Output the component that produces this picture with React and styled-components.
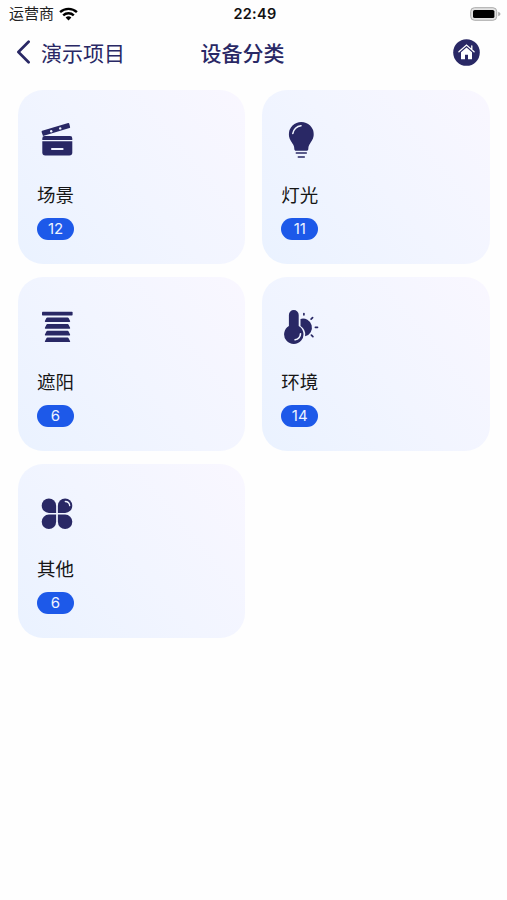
import React from 'react';
import styled, { createGlobalStyle } from 'styled-components';

const categories = [
  { id: 'scene', name: '场景', count: 12 },
  { id: 'light', name: '灯光', count: 11 },
  { id: 'shade', name: '遮阳', count: 6 },
  { id: 'climate', name: '环境', count: 14 },
  { id: 'other', name: '其他', count: 6 },
];

const icons = {
  scene: (
    <>
      <path d="M5.2 10.8 31.2 3q.8-.2 1 .6l.9 3.3q.2.8-.6 1L6 16.1l-1.4-4.2q-.2-.8.6-1.1Z" />
      <path d="M5.3 20v-1.5A2.3 2.3 0 0 1 7.6 16.1H33a2.3 2.3 0 0 1 2.3 2.4V20Z" />
      <path d="M5.3 21.3h30v11.2a3 3 0 0 1-3 3h-24a3 3 0 0 1-3-3Z" />
      <rect x="14" y="28" width="12.6" height="1.9" rx="0.9" fill="#f0f4ff" />
      <g fill="#f0f4ff">
        <circle cx="14.2" cy="11.2" r="1.2" />
        <circle cx="23.2" cy="8.4" r="1.2" />
      </g>
    </>
  ),
  light: (
    <>
      <path d="M20.3 1.9A12.4 12.4 0 0 0 7.9 14.3c0 4.6 2.3 7 4.1 10 1 1.700 1.200 3 1.300 4.600.1 1.100.700 1.800 1.700 1.800h10.600c1 0 1.600-.7 1.700-1.800.1-1.600.300-2.900 1.300-4.600 1.800-3 4.100-5.400 4.100-10A12.400 12.400 0 0 0 20.300 1.900Z" />
      <path d="M15.300 33.100h10M17.300 36.900h6" stroke="#292865" strokeWidth="1.500" strokeLinecap="round" />
      <path d="M11.800 13.500a9 9 0 0 1 8.200-7.700" stroke="#f0f4ff" strokeWidth="1.600" strokeLinecap="round" fill="none" />
    </>
  ),
  shade: (
    <>
      <rect x="5" y="4.800" width="30.600" height="3.600" rx="0.700" />
      {[10.4, 17.1, 23.8, 30.5].map(y => (
        <path key={y} d={`M10.400 ${y}h20.200q.7 0 1 .7l1.500 3q.3.9-.6.900h-24q-.9 0-.6-.9l1.500-3q.3-.7 1-.7Z`} />
      ))}
    </>
  ),
  climate: (
    <>
      <path d="M19.500 11.900a9 9 0 1 1 4.600 17.400q1.200-6.500-4.600-10.300Z" />
      <path
        d="M22.900 6.500v1.300M31.600 10.600l-1.500 1.500M34.400 20.300h2.100M30.400 28.200l1.500 1.500"
        stroke="#292865"
        strokeWidth="1.700"
        strokeLinecap="round"
      />
      <path d="M7.900 8a4.900 4.900 0 0 1 9.800 0v11a9.700 9.700 0 1 1-9.800 0Z" />
      <path d="M19.500 26.800a6.500 6.500 0 0 1-5.400 6" stroke="#f0f4ff" strokeWidth="1.600" strokeLinecap="round" fill="none" />
    </>
  ),
  other: (
    <>
      <path d="M19.100 18.900h-7.200a7.200 7.200 0 1 1 7.200-7.200Z" />
      <path d="M20.900 18.900v-7.200a7.200 7.200 0 1 1 7.200 7.200Z" />
      <path d="M19.100 20.600v7.200a7.200 7.200 0 1 1-7.200-7.200Z" />
      <path d="M20.900 20.600h7.200a7.200 7.200 0 1 1-7.200 7.200Z" />
      <path d="M28.300 7.500a4.500 4.500 0 0 1 4.400 4.100" stroke="#f0f4ff" strokeWidth="1.300" strokeLinecap="round" fill="none" />
    </>
  ),
};

const StatusIcons = {
  Wifi: () => (
    <svg width="19" height="14" viewBox="0 0 19 14" fill="none" stroke="#000" strokeWidth="2.400">
      <path d="M1.100 5.200a12.200 12.200 0 0 1 16.800 0M4.200 8.400a7.700 7.700 0 0 1 10.600 0" />
      <path d="M9.500 13.400 6.600 10.600a4.300 4.300 0 0 1 5.800 0Z" fill="#000" stroke="none" />
    </svg>
  ),
  Battery: () => (
    <svg width="31" height="14" viewBox="0 0 31 14">
      <rect x="0.700" y="0.700" width="26" height="12.600" rx="3.800" fill="#e2e2e2" stroke="#aaa" />
      <rect x="3" y="2.900" width="21.400" height="8.200" rx="1.700" fill="#000" />
      <path d="M28.200 4.700q2.300.7 2.300 2.300t-2.300 2.300Z" fill="#aaa" />
    </svg>
  ),
};

const App = () => {
  return (
    <Page>
      <GlobalStyle />
      <StatusBar>
        <Carrier>
          运营商
          <StatusIcons.Wifi />
        </Carrier>
        <Time>22:49</Time>
        <StatusIcons.Battery />
      </StatusBar>
      <Header>
        <BackButton>
          <svg width="15" height="24" viewBox="0 0 15 24" fill="none" stroke="#292865" strokeWidth="2.700">
            <path d="M12.600 1.800 2.400 12l10.200 10.200" strokeLinecap="round" strokeLinejoin="round" />
          </svg>
          演示项目
        </BackButton>
        <Title>设备分类</Title>
        <HomeButton aria-label="首页">
          <svg width="27" height="27" viewBox="0 0 27 27">
            <circle cx="13.500" cy="13.500" r="13.300" fill="#292865" />
            <path d="M8 13.200 13.500 8.400l5.500 4.800v7.100h-4v-4.500h-3v4.500H8Z" fill="#fff" />
            <path d="M5.900 12.700 13.500 6.100l7.600 6.600M18.800 10V6.800" fill="none" stroke="#fff" strokeWidth="1.300" strokeLinecap="round" />
          </svg>
        </HomeButton>
      </Header>
      <CardGrid>
        {categories.map(({ id, name, count }) => (
          <Card key={id}>
            <CardIcon viewBox="0 0 40 40">{icons[id]}</CardIcon>
            <CardName>{name}</CardName>
            <Count>{count}</Count>
          </Card>
        ))}
      </CardGrid>
    </Page>
  );
};

export default App;

const GlobalStyle = createGlobalStyle`
  * {
    box-sizing: border-box;
  }

  body {
    margin: 0;
    background-color: #fff;
    font-family: Inter, 'Noto Sans CJK SC', sans-serif;
  }

  svg {
    display: block;
    flex-shrink: 0;
  }
`;

const Page = styled.div`
  min-height: 900px;
  background-color: #fefefe;
`;

const StatusBar = styled.div`
  display: grid;
  grid-template-columns: 1fr auto 1fr;
  align-items: center;
  height: 27px;
  padding: 0 6px 0 9px;

  > :last-child {
    justify-self: end;
  }
`;

const Carrier = styled.div`
  display: flex;
  align-items: center;
  gap: 5px;
  color: #222;
  font-size: 15px;
  line-height: 27px;
`;

const Time = styled.div`
  color: #111;
  font-size: 14.5px;
  font-weight: 600;
  letter-spacing: 0.3px;
`;

const Header = styled.header`
  display: grid;
  grid-template-columns: 1fr auto 1fr;
  align-items: center;
  height: 50px;
  padding: 0 27px 0 16px;
  color: #292865;
`;

const BackButton = styled.button`
  display: flex;
  align-items: center;
  gap: 10px;
  padding: 0;
  border: none;
  background-color: transparent;
  color: inherit;
  font: inherit;
  font-size: 21px;
`;

const Title = styled.h1`
  margin: 0 0 0 -11px;
  font-size: 21px;
  font-weight: 500;
`;

const HomeButton = styled.button`
  justify-self: end;
  padding: 0;
  border: none;
  background-color: transparent;
`;

const CardGrid = styled.main`
  display: grid;
  grid-template-columns: 1fr 1fr;
  gap: 13px 17px;
  padding: 13px 17.5px 0 18px;
`;

const Card = styled.div`
  display: flex;
  flex-direction: column;
  align-items: flex-start;
  height: 174px;
  padding: 30px 19px 0;
  border-radius: 25px;
  background: linear-gradient(50deg, #eaf2ff 0%, #f2f5ff 50%, #f9f7ff 100%);
`;

const CardIcon = styled.svg`
  width: 40px;
  height: 40px;
  fill: #292865;
`;

const CardName = styled.div`
  margin-top: 21px;
  color: #161616;
  font-size: 18.5px;
  line-height: 28px;
`;

const Count = styled.div`
  width: 37px;
  height: 22px;
  margin-top: 9px;
  border-radius: 11px;
  background-color: #1d59e9;
  color: #eef3ff;
  font-size: 15px;
  line-height: 22px;
  text-align: center;
`;
